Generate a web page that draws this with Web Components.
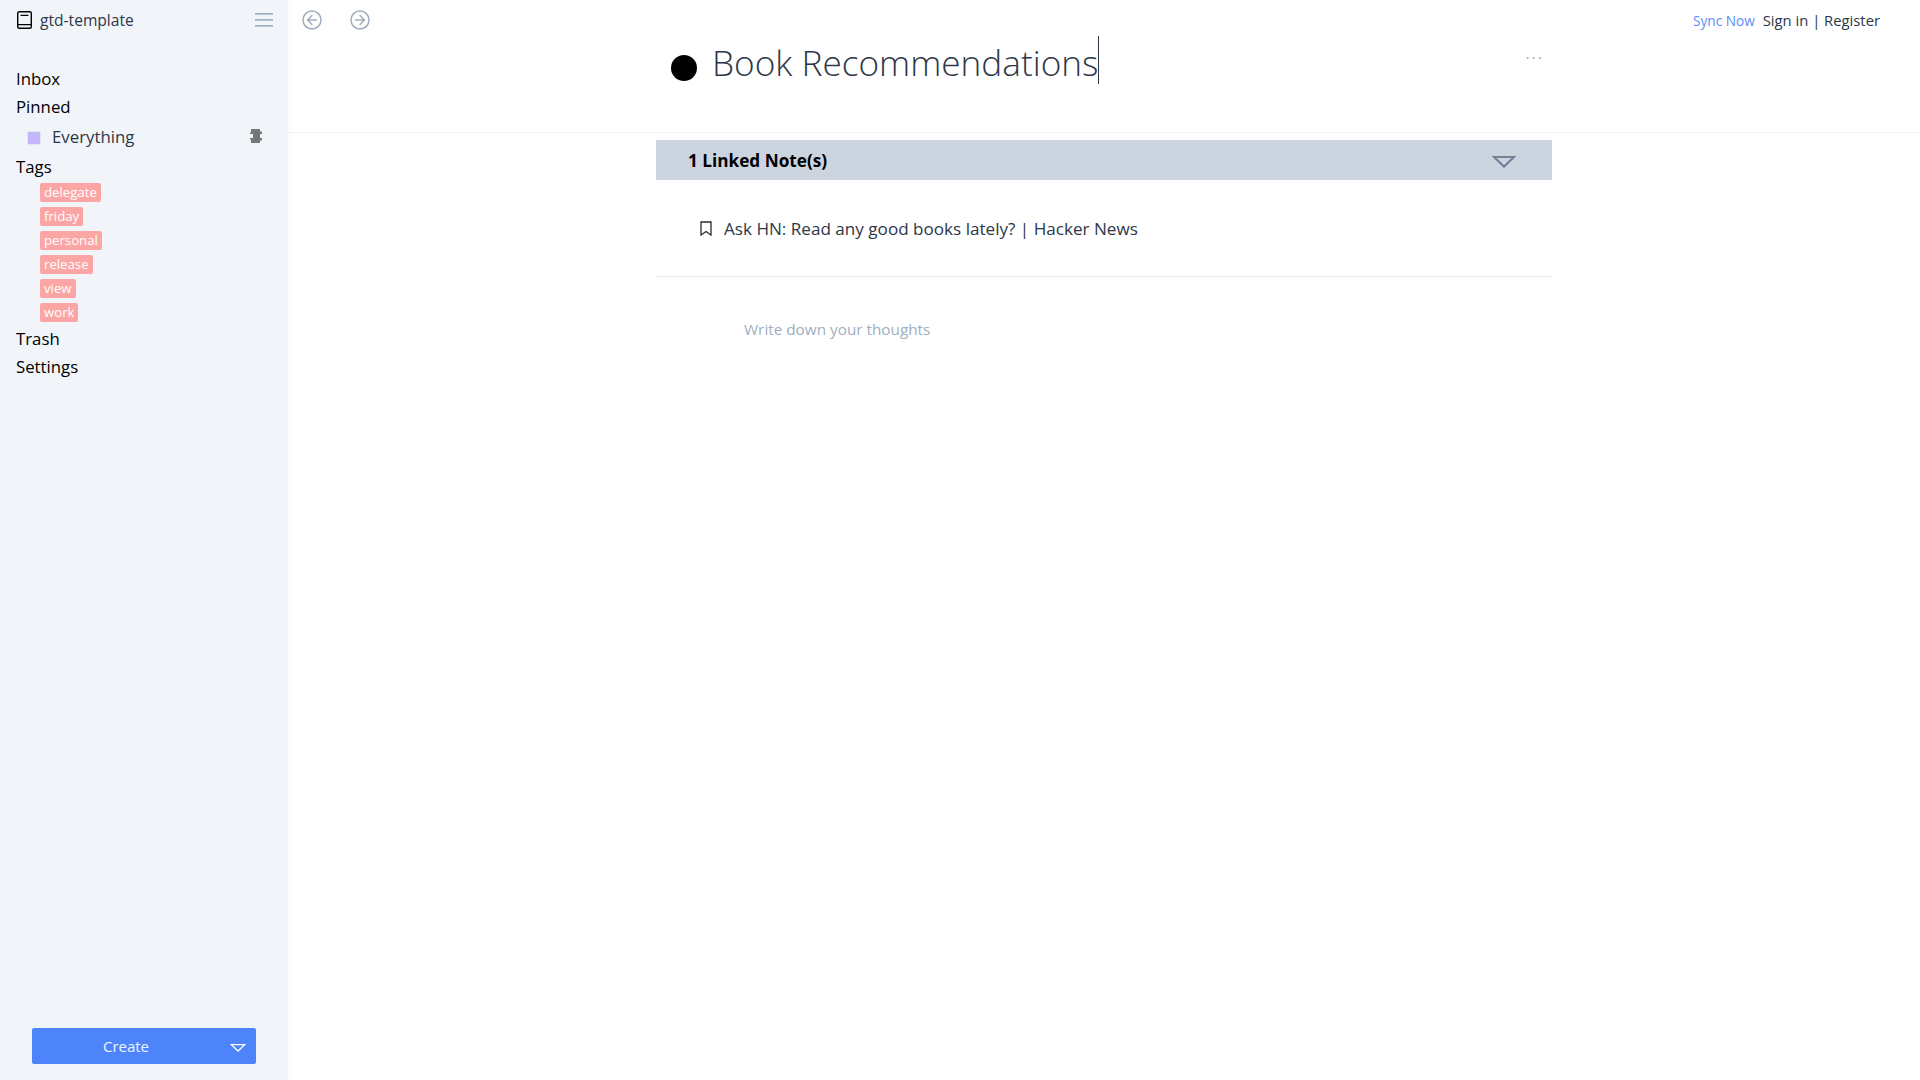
<!DOCTYPE html>
<html>
<head>
<meta charset="utf-8">
<title>gtd-template</title>
<style>
  html, body { margin: 0; height: 100%; background: #fff; }
  body { font-family: "Open Sans", "Noto Sans", sans-serif; overflow: hidden; }
</style>
</head>
<body>
<app-shell>
  <side-bar slot="side"></side-bar>
  <top-bar slot="top"></top-bar>
  <note-title slot="main" text="Book Recommendations"></note-title>
  <linked-notes slot="main" count="1" note="Ask HN: Read any good books lately? | Hacker News"></linked-notes>
  <note-editor slot="main" placeholder="Write down your thoughts"></note-editor>
</app-shell>

<script>
const TRIANGLE = `<svg viewBox="0 0 24 12" fill="none"><path d="M2 1h20L12 10.5z" stroke="currentColor" stroke-width="2"/></svg>`;

class AppShell extends HTMLElement {
  constructor() {
    super();
    this.attachShadow({ mode: 'open' }).innerHTML = `
      <style>
        :host { display: grid; grid-template-columns: 288px 1fr; height: 1080px; }
        .side { display: flex; min-height: 0; box-shadow: 2px 0 6px rgba(0,0,0,.03); z-index: 1; }
        .right { min-width: 0; }
      </style>
      <div class="side"><slot name="side"></slot></div>
      <div class="right">
        <slot name="top"></slot>
        <slot name="main"></slot>
      </div>`;
  }
}

class SideBar extends HTMLElement {
  constructor() {
    super();
    const tags = ['delegate', 'friday', 'personal', 'release', 'view', 'work'];
    this.attachShadow({ mode: 'open' }).innerHTML = `
      <style>
        :host { display: flex; flex-direction: column; width: 288px; height: 1080px; background: #f1f5fa; box-sizing: border-box; color: #000; }
        .head { display: flex; align-items: center; height: 40px; padding: 0 15px 0 17px; flex: none; color: #2d3748; font-size: 15.6px; }
        .head .book { width: 15px; height: 18px; margin-right: 8px; color: #000; }
        .head span { flex: 1; }
        .burger { width: 18px; height: 14px; color: #a0aec0; }
        nav { flex: 1; padding: 25px 16px 0; }
        .item { font-size: 16.8px; line-height: 28px; height: 28px; }
        .pin { display: flex; align-items: center; height: 30px; margin-bottom: 2px; padding-left: 12px; color: #2d3748; font-size: 16.8px; }
        .pin i { width: 14px; height: 14px; margin: 4px 11px 0 -1px; background: #c4b5fd; border: 1px solid #e2e8f0; box-sizing: border-box; }
        .pin span { flex: 1; }
        .pin svg { width: 12px; height: 14px; color: #777; margin: -1px 10px 0 0; }
        .tags { display: flex; flex-direction: column; align-items: flex-start; gap: 5px; padding: 2px 0 3px 24px; }
        .tag { height: 19px; line-height: 19px; padding: 0 4px; background: #fca5a5; color: #fff; border-radius: 2px; font-size: 13.2px; }
        .foot { flex: none; padding: 0 32px 16px; }
        .create { display: flex; align-items: center; height: 36px; background: #4d84f9; color: #ebf4ff; border-radius: 2px; font-size: 15px; }
        .create span { flex: 1; text-align: center; padding-right: 10px; }
        .create svg { width: 16px; height: 8px; margin: 3px 10px 0 0; color: #fff; }
      </style>
      <div class="head">
        <svg class="book" viewBox="0 0 15 18" fill="none" stroke="currentColor" stroke-width="1.4">
          <rect x=".7" y=".7" width="13.6" height="16.6" rx="1.5"/>
          <path d="M.7 13.6h13.6M3.6 4.4h7.8"/>
        </svg>
        <span>gtd-template</span>
        <svg class="burger" viewBox="0 0 18 14" fill="currentColor"><rect y="0" width="18" height="1.7"/><rect y="6" width="18" height="1.7"/><rect y="12" width="18" height="1.7"/></svg>
      </div>
      <nav>
        <div class="item">Inbox</div>
        <div class="item">Pinned</div>
        <div class="pin"><i></i><span>Everything</span>
          <svg viewBox="0 0 12 14" fill="currentColor"><path d="M1 0h9v2.5h2V5h-2v4h2v2.5h-2V14H1v-3.5H0V9h3V5H0V3.5h1z"/></svg>
        </div>
        <div class="item">Tags</div>
        <div class="tags">${tags.map(t => `<div class="tag">${t}</div>`).join('')}</div>
        <div class="item">Trash</div>
        <div class="item">Settings</div>
      </nav>
      <div class="foot">
        <div class="create"><span>Create</span>${TRIANGLE}</div>
      </div>`;
  }
}

class TopBar extends HTMLElement {
  constructor() {
    super();
    const circle = d => `<svg viewBox="0 0 20 20" fill="none" stroke="currentColor" stroke-width="1.5" stroke-linecap="round" stroke-linejoin="round"><circle cx="10" cy="10" r="9"/><path d="${d}"/></svg>`;
    this.attachShadow({ mode: 'open' }).innerHTML = `
      <style>
        :host { display: flex; align-items: center; height: 40px; padding: 0 40px 0 14px; font-size: 14.8px; color: #2d3748; }
        .nav { display: flex; gap: 28px; color: #a0aec0; flex: 1; }
        .nav svg { width: 20px; height: 20px; display: block; }
        .sync { color: #5a8dfb; font-size: 13.6px; margin-right: 8px; }
      </style>
      <div class="nav">
        ${circle('M10 5.5 5.5 10l4.5 4.5M5.5 10h9')}
        ${circle('M10 5.5 14.5 10 10 14.5M14.5 10h-9')}
      </div>
      <span class="sync">Sync Now</span>
      <span>Sign in | Register</span>`;
  }
}

class NoteTitle extends HTMLElement {
  constructor() {
    super();
    const text = this.getAttribute('text');
    this.attachShadow({ mode: 'open' }).innerHTML = `
      <style>
        :host { display: flex; height: 92px; border-bottom: 1px solid #f3f4f6; padding-left: 368px; }
        .wrap { display: flex; width: 896px; align-items: flex-start; }
        .dot { width: 26px; height: 26px; border-radius: 50%; background: #000; margin: 15px 15px 0 15px; flex: none; }
        h1 { margin: -2px 0 0; font-weight: 300; font-size: 35.2px; line-height: 48px; color: #2d3748; flex: 1; white-space: nowrap; }
        .caret { display: inline-block; width: 1px; height: 48px; background: #2d3748; vertical-align: top; transform: translateY(-2px); }
        .more { color: #a0aec0; letter-spacing: 2px; font-size: 16px; line-height: 16px; margin: 5px 8px 0 0; }
      </style>
      <div class="wrap">
        <div class="dot"></div>
        <h1>${text}<span class="caret"></span></h1>
        <div class="more">...</div>
      </div>`;
  }
}

class LinkedNotes extends HTMLElement {
  constructor() {
    super();
    this.attachShadow({ mode: 'open' }).innerHTML = `
      <style>
        :host { display: block; width: 896px; margin: 7px 0 0 368px; }
        .bar { display: flex; align-items: center; height: 40px; background: #ccd4e0; padding: 0 36px 0 32px; font-weight: 700; font-size: 17.2px; color: #000; }
        .bar span { flex: 1; }
        .bar svg { width: 24px; height: 12px; color: #718096; margin-top: 4px; }
        .row { display: flex; align-items: center; height: 97px; border-bottom: 1px solid #e2e8f0; padding-left: 44px; box-sizing: border-box; color: #2d3748; font-size: 17.1px; }
        .row svg { width: 12px; height: 15px; margin-right: 12px; color: #2b2b2b; }
      </style>
      <div class="bar"><span>${this.getAttribute('count')} Linked Note(s)</span>${TRIANGLE}</div>
      <div class="row">
        <svg viewBox="0 0 12 15" fill="none" stroke="currentColor" stroke-width="1.3"><path d="M1 1h10v13L6 10.5 1 14z"/></svg>
        <span>${this.getAttribute('note')}</span>
      </div>`;
  }
}

class NoteEditor extends HTMLElement {
  constructor() {
    super();
    this.attachShadow({ mode: 'open' }).innerHTML = `
      <style>
        :host { display: block; width: 896px; margin-left: 368px; padding: 40px 0 0 88px; box-sizing: border-box; font-size: 15.3px; line-height: 24px; color: #a0aec0; }
      </style>
      ${this.getAttribute('placeholder')}`;
  }
}

customElements.define('app-shell', AppShell);
customElements.define('side-bar', SideBar);
customElements.define('top-bar', TopBar);
customElements.define('note-title', NoteTitle);
customElements.define('linked-notes', LinkedNotes);
customElements.define('note-editor', NoteEditor);
</script>
</body>
</html>
